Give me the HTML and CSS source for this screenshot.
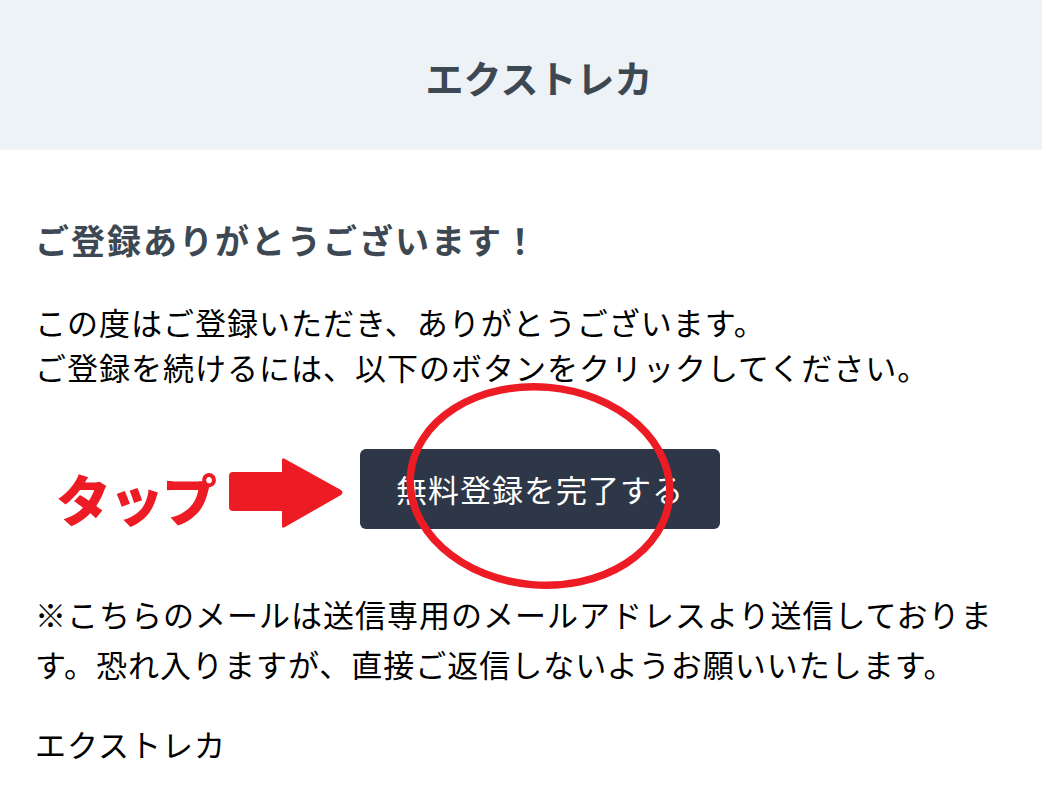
FILE: index.html
```html
<!DOCTYPE html>
<html lang="ja">
<head>
<meta charset="utf-8">
<title>エクストレカ</title>
<link rel="stylesheet" href="styles.css">
</head>
<body>
<header class="masthead">
  <h1 class="brand">エクストレカ</h1>
</header>
<main class="content">
  <h2 class="title">ご登録ありがとうございます！</h2>
  <p class="lead">この度はご登録いただき、ありがとうございます。<br>ご登録を続けるには、以下のボタンをクリックしてください。</p>
  <div class="action">
    <div class="button-wrap">
      <a class="button" href="#">無料登録を完了する</a>
      <span class="tap-label">タップ</span>
      <svg class="tap-arrow" width="116" height="73" viewBox="0 0 116 73" aria-hidden="true">
        <rect x="0" y="15" width="60" height="39" rx="4" fill="#ed1c24"/>
        <path d="M53 3 Q53 0 56 2 L112 33 Q115 35.5 112 38 L56 70 Q53 72 53 69 Z" fill="#ed1c24"/>
      </svg>
      <svg class="tap-circle" width="280" height="215" viewBox="0 0 280 215" aria-hidden="true">
        <ellipse cx="140" cy="107" rx="130" ry="99" fill="none" stroke="#ed1c24" stroke-width="7.5" transform="rotate(5 140 107)"/>
      </svg>
    </div>
  </div>
  <p class="note">※こちらのメールは送信専用のメールアドレスより送信しております。恐れ入りますが、直接ご返信しないようお願いいたします。</p>
  <p class="sign">エクストレカ</p>
</main>
</body>
</html>
```
FILE: styles.css
```css
html, body {
  margin: 0;
  padding: 0;
  background: #ffffff;
}

body {
  font-family: "Noto Sans CJK JP", "Noto Sans", sans-serif;
  color: #000000;
}

.masthead {
  height: 150px;
  background: #edf2f7;
  display: flex;
  align-items: center;
  justify-content: center;
  padding-left: 36px;
  box-sizing: border-box;
}

.brand {
  margin: 0;
  font-size: 38px;
  font-weight: 700;
  line-height: 1;
  color: #3d4852;
  padding-top: 4px;
}

.content {
  padding: 0 10px 0 35px;
}

.title {
  margin: 67px 0 0;
  font-size: 34px;
  line-height: 46px;
  font-weight: 700;
  color: #3d4852;
  letter-spacing: 2px;
}

.lead {
  margin: 36px 0 0;
  font-size: 31px;
  line-height: 45px;
  letter-spacing: 1px;
}

.action {
  margin-top: 60px;
  display: flex;
  padding-left: 325px;
}

.button-wrap {
  position: relative;
}

.button {
  display: block;
  width: 360px;
  height: 80px;
  box-sizing: border-box;
  background: #2d3748;
  border-radius: 6px;
  color: #ffffff;
  text-decoration: none;
  font-size: 31px;
  line-height: 80px;
  text-align: center;
  letter-spacing: 1px;
}

.tap-label {
  position: absolute;
  left: -304px;
  top: 18px;
  font-size: 55px;
  line-height: 60px;
  font-weight: 900;
  color: #ed1c24;
  white-space: nowrap;
  letter-spacing: -2px;
}

.tap-arrow {
  position: absolute;
  left: -131px;
  top: 8px;
}

.tap-circle {
  position: absolute;
  left: 40px;
  top: -70px;
  pointer-events: none;
}

.note {
  margin: 60px 0 0;
  font-size: 31px;
  line-height: 50px;
  letter-spacing: 1px;
}

.sign {
  margin: 30px 0 0;
  font-size: 31px;
  line-height: 50px;
  letter-spacing: 1px;
}
```
